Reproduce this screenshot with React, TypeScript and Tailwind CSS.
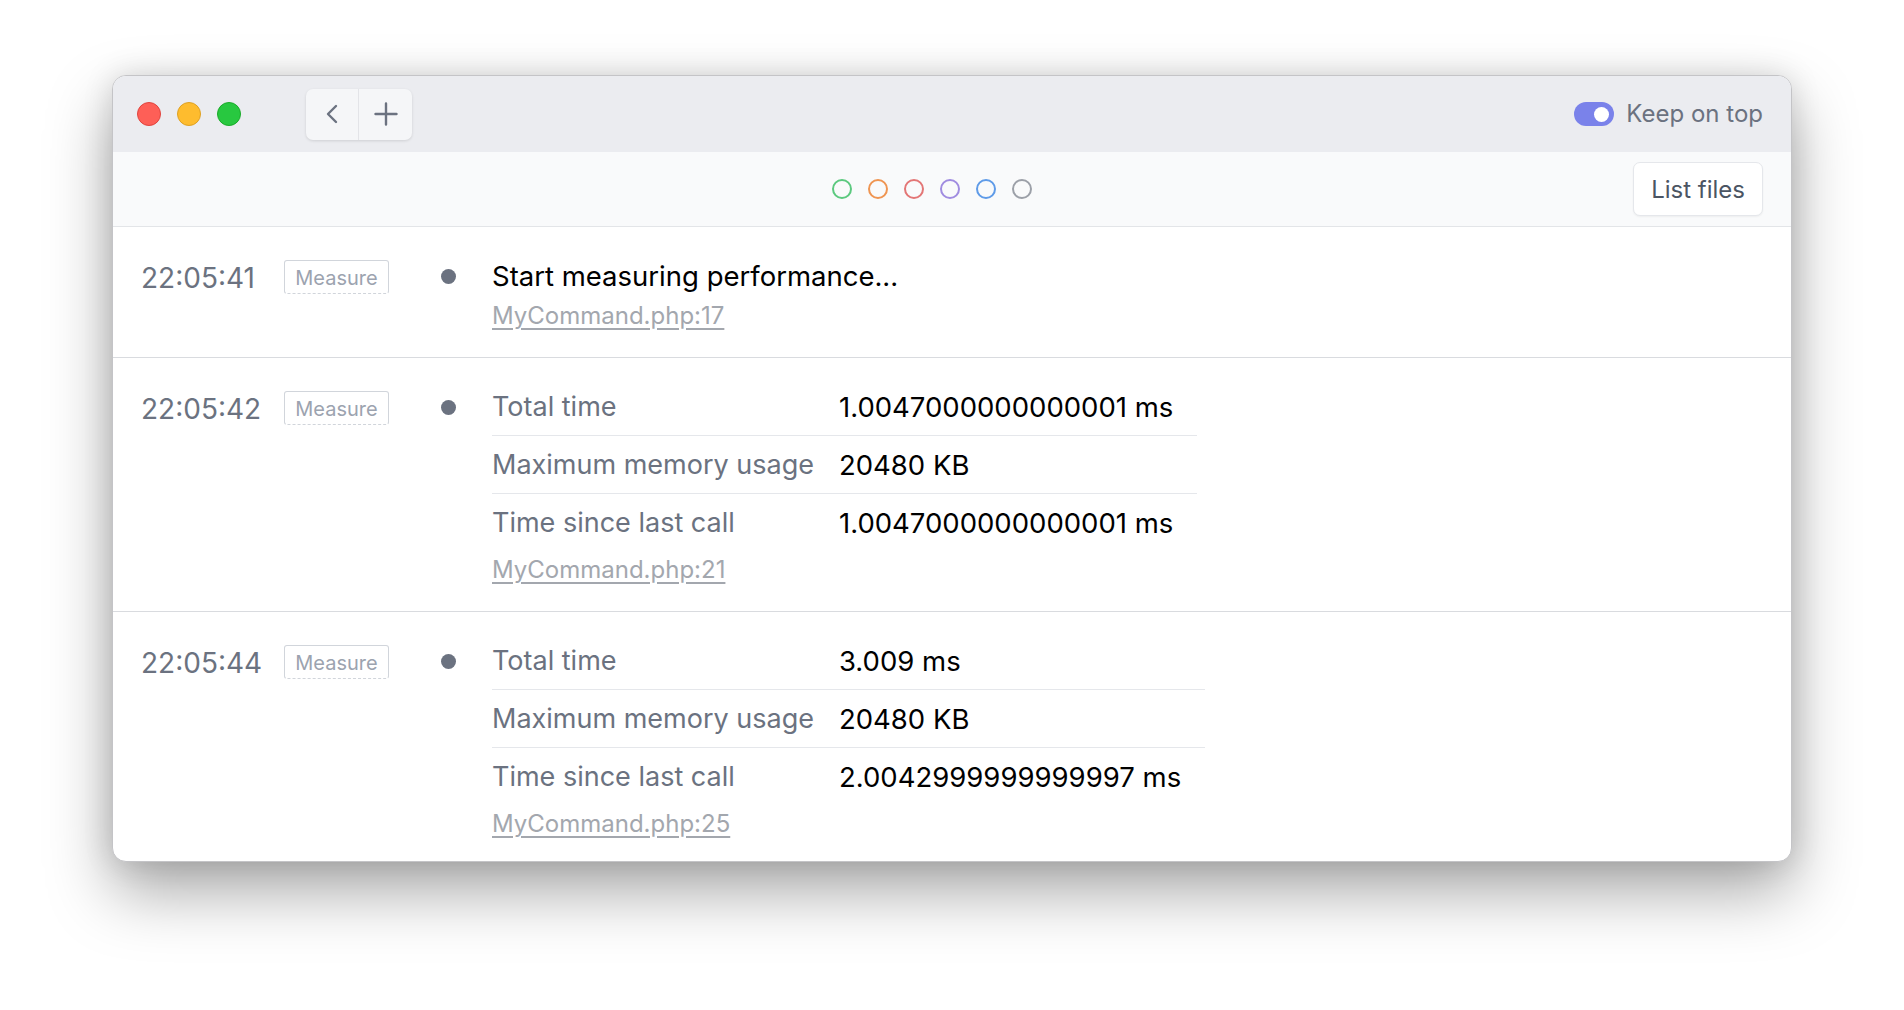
type Row = { label: string; value: string }

const entries: { time: string; message?: string; table?: Row[]; file: string }[] = [
  { time: "22:05:41", message: "Start measuring performance...", file: "MyCommand.php:17" },
  {
    time: "22:05:42",
    table: [
      { label: "Total time", value: "1.0047000000000001 ms" },
      { label: "Maximum memory usage", value: "20480 KB" },
      { label: "Time since last call", value: "1.0047000000000001 ms" },
    ],
    file: "MyCommand.php:21",
  },
  {
    time: "22:05:44",
    table: [
      { label: "Total time", value: "3.009 ms" },
      { label: "Maximum memory usage", value: "20480 KB" },
      { label: "Time since last call", value: "2.0042999999999997 ms" },
    ],
    file: "MyCommand.php:25",
  },
]

const colors = [
  "border-[#5cc97f]",
  "border-[#ef9552]",
  "border-[#e37676]",
  "border-[#a08ce0]",
  "border-[#5f9be8]",
  "border-[#9ca0a8]",
]

export default function App() {
  return (
    <div className="min-h-screen bg-white pt-[75px] font-[Inter,'Noto_Sans',sans-serif]">
      <div className="mx-auto w-[1680px] h-[787px] flex flex-col rounded-[14px] overflow-hidden border border-[#c4c4c7] bg-white shadow-[0_30px_64px_rgba(0,0,0,0.34),0_0_30px_rgba(0,0,0,0.13)]">
        {/* title bar */}
        <div className="h-[76px] shrink-0 bg-[#ebecf0] flex items-center pl-6 pr-[28px]">
          <div className="flex items-center gap-4">
            <span className="w-6 h-6 rounded-full bg-[#fe5f57] border border-[#e0443e]" />
            <span className="w-6 h-6 rounded-full bg-[#febc2e] border border-[#dea123]" />
            <span className="w-6 h-6 rounded-full bg-[#28c840] border border-[#1aab29]" />
          </div>
          <div className="ml-[65px] flex rounded-[7px] bg-[#f5f6f8] shadow-[0_1px_3px_rgba(0,0,0,0.12)]">
            <button className="w-[53px] h-[51px] flex items-center justify-center text-[#6b7280] border-r border-[#e3e4e8]">
              <svg width="14" height="20" viewBox="0 0 14 20" fill="none" stroke="currentColor" strokeWidth="2.4" strokeLinecap="round" strokeLinejoin="round">
                <path d="M11 2 3 10l8 8" />
              </svg>
            </button>
            <button className="w-[53px] h-[51px] flex items-center justify-center text-[#6b7280]">
              <svg width="24" height="24" viewBox="0 0 24 24" fill="none" stroke="currentColor" strokeWidth="2.4" strokeLinecap="round">
                <path d="M12 1.5v21M1.5 12h21" />
              </svg>
            </button>
          </div>
          <div className="ml-auto flex items-center gap-3">
            <span className="w-10 h-6 rounded-full bg-[#7a82ea] flex items-center justify-end pr-[5px]">
              <span className="w-[15px] h-[15px] rounded-full bg-white" />
            </span>
            <span className="text-[24px] text-[#6b7280]">Keep on top</span>
          </div>
        </div>

        {/* toolbar */}
        <div className="h-[75px] shrink-0 bg-[#f9fafb] border-b border-[#e3e5e8] flex items-center px-[28px]">
          <div className="flex-1 flex justify-center gap-4 pl-[90px]">
            {colors.map((c) => (
              <span key={c} className={`w-5 h-5 rounded-full border-2 ${c}`} />
            ))}
          </div>
          <button className="h-[54px] px-[17px] pt-[2px] rounded-[7px] border border-[#e5e7eb] bg-white text-[24px] text-[#4b5563] shadow-[0_1px_2px_rgba(0,0,0,0.05)]">
            List files
          </button>
        </div>

        {/* log */}
        <div className="flex-1">
          {entries.map((e, i) => (
            <div
              key={e.time}
              className={`flex items-start pl-[28px] pt-[29px] pb-[25px] ${i < entries.length - 1 ? "border-b border-[#d9dbdf]" : ""}`}
            >
              <div className="w-[143px] pt-[2px] text-[28px] leading-[40px] text-[#6b7280]">{e.time}</div>
              <div className="h-[40px] pt-[2px] flex items-center">
                <span className="w-[105px] h-[34px] pt-[2px] flex items-center justify-center border border-[#d1d5db] [border-bottom-style:dashed] rounded-[3px] text-[20px] text-[#9ca3af]">
                  Measure
                </span>
              </div>
              <div className="h-[40px] flex items-center ml-[52px]">
                <span className="w-[15px] h-[15px] rounded-full bg-[#6b7280]" />
              </div>
              <div className="ml-[36px] flex flex-col items-start">
                {e.message && <div className="text-[27.5px] leading-[40px] text-black">{e.message}</div>}
                {e.table && (
                  <table className="-mt-[9px] border-collapse text-[27px] leading-[40px]">
                    <tbody>
                      {e.table.map((r, j) => (
                        <tr key={r.label} className={j < e.table!.length - 1 ? "border-b border-[#e5e7eb]" : ""}>
                          <td className="pt-[9px] pb-[8px] pr-[25px] text-[#6b7280] whitespace-nowrap">{r.label}</td>
                          <td className="pt-[9px] pb-[8px] pr-[24px] text-[27.5px] text-black whitespace-nowrap">{r.value}</td>
                        </tr>
                      ))}
                    </tbody>
                  </table>
                )}
                <a className={`${e.table ? "mt-[3px]" : "mt-1"} text-[24px] leading-[32px] text-[#a3a7ae] underline underline-offset-4`}>
                  {e.file}
                </a>
              </div>
            </div>
          ))}
        </div>
      </div>
    </div>
  )
}
